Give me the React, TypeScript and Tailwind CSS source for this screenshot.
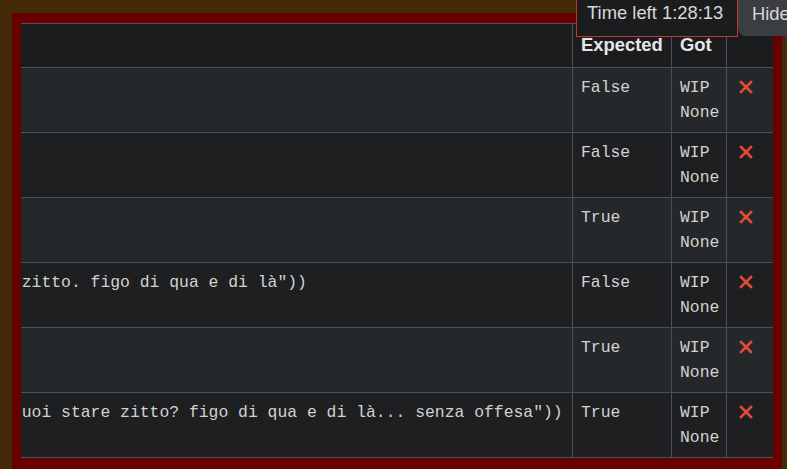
import React from 'react';

type Row = {
  code: string;
  expected: string;
};

const rows: Row[] = [
  { code: 'is_figo("")', expected: 'False' },
  { code: 'is_figo("no")', expected: 'False' },
  { code: 'is_figo("sì")', expected: 'True' },
  { code: 'is_figo("stai zitto. figo di qua e di là"))', expected: 'False' },
  { code: 'is_figo("ok")', expected: 'True' },
  { code: 'is_figo("non puoi stare zitto? figo di qua e di là... senza offesa"))', expected: 'True' },
];

const Cross = () => (
  <svg width="14" height="14" viewBox="0 0 14 14" className="block">
    <path d="M2 2 L12 12 M12 2 L2 12" stroke="#e5493a" strokeWidth="2.6" strokeLinecap="square" />
  </svg>
);

const App: React.FC = () => {
  return (
    <div className="relative h-[469px] w-[787px] overflow-hidden bg-[#452a08] pl-3 pr-[5px] pt-[13px]">
      <div className="h-[470px] bg-[#690000] px-[9px] pt-[10px]">
        <div className="overflow-hidden">
          <table className="-ml-[146px] w-[898px] table-fixed border-collapse font-['Liberation_Mono',monospace] text-[16.4px] leading-[25px] text-[#d2d2d2]">
            <colgroup>
              <col className="w-[697px]" />
              <col className="w-[99px]" />
              <col className="w-[55px]" />
              <col className="w-[47px]" />
            </colgroup>
            <thead>
              <tr className="h-[44px] bg-[#1b1c1e] font-['Liberation_Sans',Arial,sans-serif] text-[18.4px] font-bold text-[#e6e6e6]">
                <th className="border border-[#4a5056] px-2"></th>
                <th className="border border-[#4a5056] px-2 pb-[11px] text-left align-bottom leading-[22px]">Expected</th>
                <th className="border border-[#4a5056] px-2 pb-[11px] text-left align-bottom leading-[22px]">Got</th>
                <th className="border border-[#4a5056] px-2"></th>
              </tr>
            </thead>
            <tbody>
              {rows.map((row, i) => (
                <tr key={i} className={i % 2 === 0 ? 'bg-[#25282b]' : 'bg-[#1e1f21]'}>
                  <td className="whitespace-nowrap border border-[#4a5056] px-2 py-[7px] align-top">{row.code}</td>
                  <td className="border border-[#4a5056] px-2 py-[7px] align-top">{row.expected}</td>
                  <td className="border border-[#4a5056] px-2 py-[7px] align-top">
                    <div>WIP</div>
                    <div>None</div>
                  </td>
                  <td className="border border-[#4a5056] pl-3 pt-[12px] align-top">
                    <Cross />
                  </td>
                </tr>
              ))}
            </tbody>
          </table>
        </div>
      </div>

      <div className="absolute left-[576px] top-0 h-[37px] w-[162px] border border-t-0 border-[#c0392b] bg-[#1b1c1e] px-[10px] pt-[2px] font-['Liberation_Sans',Arial,sans-serif] text-[18.4px] leading-[22px] text-[#d8d8d8]">
        Time left 1:28:13
      </div>
      <div className="absolute left-[738px] top-0 h-[36px] w-[80px] rounded-bl-[8px] bg-[#3a3d41] pl-[14px] pt-[3px] font-['Liberation_Sans',Arial,sans-serif] text-[18.4px] leading-[22px] text-[#d8d8d8]">
        Hide
      </div>
    </div>
  );
};

export default App;
